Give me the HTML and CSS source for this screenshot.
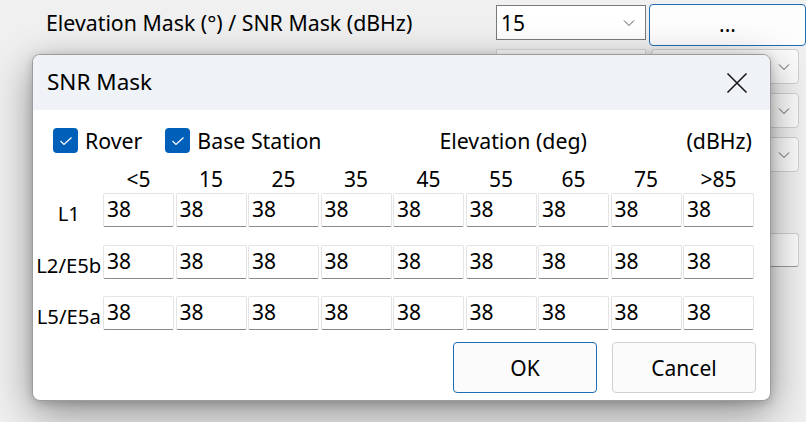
FILE: index.html
```html
<!DOCTYPE html>
<html>
<head>
<meta charset="utf-8">
<link rel="stylesheet" href="styles.css">
</head>
<body>
<div class="form">
  <div class="frow">
    <span class="flabel">Elevation Mask (°) / SNR Mask (dBHz)</span>
    <div class="combo"><span>15</span><svg class="chev" width="12" height="8" viewBox="0 0 12 8"><path d="M1 1.5 L6 6.5 L11 1.5" fill="none" stroke="#555" stroke-width="1"/></svg></div>
    <div class="dots">...</div>
  </div>
  <div class="frow">
    <span class="flabel"></span>
    <div class="combo ghost"></div>
    <div class="combo2"><svg class="chev" width="12" height="8" viewBox="0 0 12 8"><path d="M1 1.5 L6 6.5 L11 1.5" fill="none" stroke="#555" stroke-width="1"/></svg></div>
  </div>
  <div class="frow">
    <span class="flabel"></span>
    <div class="combo ghost"></div>
    <div class="combo2"><svg class="chev" width="12" height="8" viewBox="0 0 12 8"><path d="M1 1.5 L6 6.5 L11 1.5" fill="none" stroke="#555" stroke-width="1"/></svg></div>
  </div>
  <div class="frow">
    <span class="flabel"></span>
    <div class="combo ghost"></div>
    <div class="combo2"><svg class="chev" width="12" height="8" viewBox="0 0 12 8"><path d="M1 1.5 L6 6.5 L11 1.5" fill="none" stroke="#555" stroke-width="1"/></svg></div>
  </div>
  <div class="frow low">
    <span class="flabel"></span>
    <div class="combo ghost"></div>
    <div class="box2"></div>
  </div>
</div>

<div class="dialog">
  <div class="titlebar">
    <span class="title">SNR Mask</span>
    <svg class="close" width="22" height="22" viewBox="0 0 22 22"><path d="M1.5 1.5 L20.5 20.5 M20.5 1.5 L1.5 20.5" stroke="#1a1a1a" stroke-width="1.6" fill="none"/></svg>
  </div>
  <div class="content">
    <div class="toprow">
      <label class="cb"><span class="box"><svg width="14" height="10" viewBox="0 0 14 10"><path d="M1.5 5 L5 8.5 L12.5 1.5" fill="none" stroke="#fff" stroke-width="1.2"/></svg></span>Rover</label>
      <label class="cb cb2"><span class="box"><svg width="14" height="10" viewBox="0 0 14 10"><path d="M1.5 5 L5 8.5 L12.5 1.5" fill="none" stroke="#fff" stroke-width="1.2"/></svg></span>Base Station</label>
      <span class="elev">Elevation (deg)</span>
      <span class="unit">(dBHz)</span>
    </div>
    <div class="heads">
      <span></span>
      <span class="hd">&lt;5</span><span class="hd">15</span><span class="hd">25</span><span class="hd">35</span><span class="hd">45</span><span class="hd">55</span><span class="hd">65</span><span class="hd">75</span><span class="hd">&gt;85</span>
    </div>
    <div class="grid">
      <span class="rl">L1</span>
      <span class="cell">38</span><span class="cell">38</span><span class="cell">38</span><span class="cell">38</span><span class="cell">38</span><span class="cell">38</span><span class="cell">38</span><span class="cell">38</span><span class="cell">38</span>

      <span class="rl">L2/E5b</span>
      <span class="cell">38</span><span class="cell">38</span><span class="cell">38</span><span class="cell">38</span><span class="cell">38</span><span class="cell">38</span><span class="cell">38</span><span class="cell">38</span><span class="cell">38</span>

      <span class="rl">L5/E5a</span>
      <span class="cell">38</span><span class="cell">38</span><span class="cell">38</span><span class="cell">38</span><span class="cell">38</span><span class="cell">38</span><span class="cell">38</span><span class="cell">38</span><span class="cell">38</span>
    </div>
    <div class="buttons">
      <div class="btn ok">OK</div>
      <div class="btn">Cancel</div>
    </div>
  </div>
</div>
</body>
</html>
```
FILE: styles.css
```css
html, body {
  margin: 0;
  padding: 0;
}
body {
  width: 806px;
  height: 422px;
  overflow: hidden;
  background: #f0f0f0;
  font-family: "Noto Sans", "Liberation Sans", sans-serif;
  color: #000;
  position: relative;
}
.form {
  display: flex;
  flex-direction: column;
  gap: 9px;
  padding-top: 5px;
}
.frow {
  display: flex;
  align-items: flex-start;
  height: 35px;
}
.frow.low {
  margin-top: 52px;
}
.flabel {
  width: 496px;
  padding-left: 46px;
  box-sizing: border-box;
  font-size: 21.3px;
  line-height: 35px;
  white-space: nowrap;
}
.combo {
  width: 150px;
  height: 35px;
  box-sizing: border-box;
  border: 1px solid #7a7a7a;
  background: #fff;
  display: flex;
  align-items: center;
  justify-content: space-between;
  padding: 0 10px 0 4px;
  font-size: 21px;
}
.combo.ghost {
  border-color: #d9d9d9;
}
.dots {
  margin-left: 3px;
  width: 157px;
  height: 42px;
  margin-top: -1px;
  box-sizing: border-box;
  border: 1px solid #1f6db5;
  border-radius: 4px;
  background: #fdfdfd;
  display: flex;
  align-items: center;
  justify-content: center;
  font-size: 21px;
  padding-bottom: 2px;
}
.combo2 {
  margin-left: 5px;
  width: 148px;
  height: 35px;
  box-sizing: border-box;
  border: 1px solid #d0d0d0;
  border-radius: 4px;
  background: #fbfbfb;
  display: flex;
  align-items: center;
  justify-content: flex-end;
  padding-right: 8px;
}
.box2 {
  margin-left: 5px;
  width: 148px;
  height: 34px;
  box-sizing: border-box;
  border: 1px solid #d0d0d0;
  border-bottom-color: #9a9a9a;
  border-radius: 3px;
  background: #fbfbfb;
}

.dialog {
  position: absolute;
  left: 32px;
  top: 54px;
  width: 739px;
  height: 347px;
  box-sizing: border-box;
  border: 1px solid #9c9c9c;
  border-radius: 8px;
  background: #fff;
  overflow: hidden;
  box-shadow: 0 12px 40px rgba(0, 0, 0, 0.42), 0 2px 10px rgba(0,0,0,0.18);
}
.titlebar {
  height: 55px;
  background: #eff2f7;
  display: flex;
  align-items: center;
  justify-content: space-between;
  padding: 0 22px 0 14px;
}
.title {
  font-size: 22.5px;
  padding-bottom: 2px;
}
.close {
  display: block;
}
.content {
  padding: 17px 0 0 1px;
}
.toprow {
  display: flex;
  align-items: center;
  height: 27px;
  font-size: 21.3px;
  padding-left: 19px;
  white-space: nowrap;
}
.cb {
  display: flex;
  align-items: center;
  gap: 7px;
}
.cb2 {
  margin-left: 23px;
}
.box {
  width: 25px;
  height: 25px;
  border-radius: 4px;
  background: #005fb8;
  display: flex;
  align-items: center;
  justify-content: center;
}
.box svg { display: block; }
.elev {
  margin-left: 118px;
}
.unit {
  margin-left: auto;
  margin-right: 18px;
}
.heads, .grid {
  display: grid;
  grid-template-columns: 67.5px repeat(9, 71px);
  column-gap: 1.5px;
  font-size: 21px;
}
.heads {
  height: 27px;
  margin-top: 12px;
}
.hd {
  text-align: center;
  line-height: 27px;
}
.grid {
  grid-template-rows: 34px 34px 34px;
  row-gap: 17.5px;
}
.rl {
  text-align: center;
  line-height: 34px;
  white-space: nowrap;
  font-size: 20.3px;
  padding-top: 3px;
  margin-right: -2px;
}
.cell {
  box-sizing: border-box;
  border: 1px solid #e4e4e4;
  border-bottom: 1px solid #8a8a8a;
  border-radius: 2px;
  padding-left: 3px;
  line-height: 31px;
  background: #fff;
}
.buttons {
  display: flex;
  justify-content: flex-end;
  gap: 15px;
  padding-right: 14px;
  margin-top: 12px;
}
.btn {
  width: 144px;
  height: 51px;
  box-sizing: border-box;
  border: 1px solid #d0d0d0;
  border-radius: 4px;
  background: #fbfbfb;
  display: flex;
  align-items: center;
  justify-content: center;
  font-size: 21px;
}
.btn.ok {
  border-color: #1f6db5;
}
```
